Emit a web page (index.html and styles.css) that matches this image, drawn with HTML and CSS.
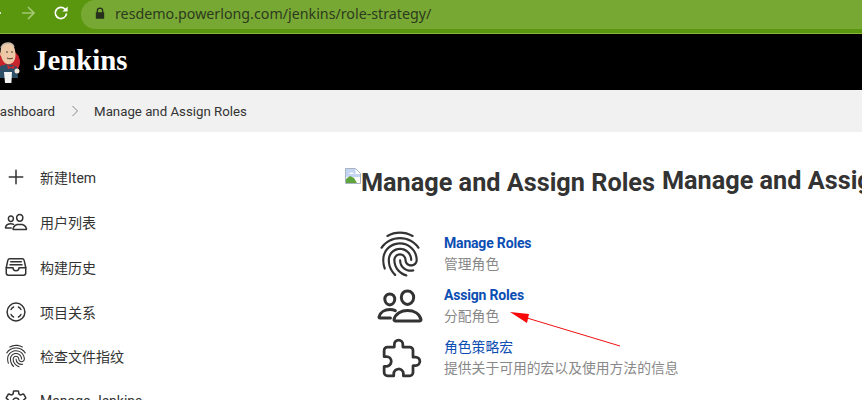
FILE: index.html
```html
<!DOCTYPE html>
<html lang="en">
<head>
    <meta charset="UTF-8">
    <meta name="viewport" content="width=device-width, initial-scale=1.0">
    <title>Manage and Assign Roles</title>
    <link rel="stylesheet" href="styles.css">
</head>
<body>

    <svg class="sprites" width="0" height="0">
        <symbol id="i-add" viewBox="0 0 512 512">
            <path class="ln" d="M256 112v288M400 256H112"/>
        </symbol>
        <symbol id="i-people" viewBox="0 0 512 512">
            <path class="ln" d="M402 168c-2.93 40.67-33.1 72-66 72s-63.12-31.32-66-72c-3-42.31 26.37-72 66-72s69 30.46 66 72z"/>
            <path class="ln" d="M336 304c-65.17 0-127.84 32.37-143.54 95.41-2.08 8.34 3.15 16.59 11.72 16.59h263.65c8.57 0 13.77-8.25 11.72-16.59C463.85 335.36 401.18 304 336 304z"/>
            <path class="ln" d="M200 185.94c-2.34 32.48-26.72 58.06-53 58.06s-50.7-25.57-53-58.06C91.61 152.15 115.34 128 147 128s55.39 24.77 53 57.94z"/>
            <path class="ln" d="M206 306c-18.05-8.27-37.93-11.45-59-11.45-52 0-102.1 25.85-114.65 76.2-1.65 6.66 2.53 13.25 9.37 13.25H154"/>
        </symbol>
        <symbol id="i-tray" viewBox="0 0 512 512">
            <path class="ln" d="M384 80H128c-26 0-43 14-48 40L48 272v112a48.14 48.14 0 0048 48h320a48.14 48.14 0 0048-48V272l-32-152c-5-27-23-40-48-40z"/>
            <path class="ln" d="M48 272h144M320 272h144M192 272a64 64 0 00128 0M144 144h224M128 208h256"/>
        </symbol>
        <symbol id="i-relation" viewBox="0 0 512 512">
            <circle class="ln" cx="256" cy="256" r="190"/>
            <path class="ln" d="M205 150c-24 10-44 30-54 54M307 150c24 10 44 30 54 54M205 362c-24-10-44-30-54-54M307 362c24-10 44-30 54-54"/>
        </symbol>
        <symbol id="i-finger" viewBox="0 0 512 512">
            <path class="fl" d="M390.42 75.28a10.45 10.45 0 01-5.32-1.44C340.72 50.08 302.35 40 256.35 40c-45.77 0-89.23 11.28-128.76 33.84C122 77 115.11 74.8 111.87 69a12.4 12.4 0 014.63-16.32A281.81 281.81 0 01256.35 16c49.23 0 92.23 11.28 139.39 36.48a12 12 0 014.85 16.08 11.3 11.3 0 01-10.17 6.72zm-330.79 126a11.73 11.73 0 01-6.7-2.16 12.26 12.26 0 01-2.78-16.8c22.89-33.6 52-60 86.69-78.48 72.58-38.84 165.51-39.12 238.32-.24 34.68 18.48 63.8 44.64 86.69 78a12.29 12.29 0 01-2.78 16.8 11.26 11.26 0 01-16.18-2.88c-20.8-30.24-47.15-54-78.36-70.56-66.34-35.28-151.18-35.28-217.29.24-31.44 16.8-57.79 40.8-78.59 71a10 10 0 01-9.02 4.08zM204.1 491a10.66 10.66 0 01-8.09-3.6C175.9 466.48 165 453 149.55 424c-16-29.52-24.27-65.52-24.27-104.16 0-71.28 58.71-129.36 130.84-129.36S387 248.56 387 319.84a11.56 11.56 0 11-23.11 0c0-58.08-48.32-105.36-107.72-105.36S148.4 261.76 148.4 319.84c0 34.56 7.39 66.48 21.49 92.4 14.8 27.6 25 39.36 42.77 58.08a12.67 12.67 0 010 17 12.44 12.44 0 01-8.56 3.68zm165.75-44.4c-27.51 0-51.78-7.2-71.66-21.36a124.34 124.34 0 01-52.47-101.76 11.56 11.56 0 1123.11 0 100.09 100.09 0 0043 81.6c16.41 11.52 35.6 17 58.95 17a147.41 147.41 0 0024-2.4c6.24-1.2 12.25 3.12 13.4 9.84a11.92 11.92 0 01-9.47 13.92 152.28 152.28 0 01-27.86 2.16zM323.38 496a13 13 0 01-3-.48c-36.76-10.56-60.8-24.72-86-50.4-32.37-33.36-50.16-77.76-50.16-125.28 0-38.88 31.9-70.56 71.19-70.56s71.2 31.68 71.2 70.56c0 25.68 21.5 46.56 48.08 46.56s48.08-20.88 48.08-46.56c0-90.48-75.13-163.92-167.59-163.92-65.65 0-125.75 37.92-152.79 96.72-9 19.44-13.64 42.24-13.64 67.2 0 18.72 1.61 48.24 15.48 86.64 2.32 6.24-.69 13.2-6.7 15.36a11.34 11.34 0 01-14.79-7 276.39 276.39 0 01-16.88-95c0-28.8 5.32-55 15.72-77.76 30.75-67 98.94-110.4 173.6-110.4 105.18 0 190.71 84.24 190.71 187.92 0 38.88-31.9 70.56-71.2 70.56s-71.2-31.68-71.2-70.56c.01-25.68-21.49-46.56-48.07-46.56s-48.08 20.88-48.08 46.56c0 41 15.26 79.44 43.23 108.24 22 22.56 43 35 75.59 44.4 6.24 1.68 9.71 8.4 8.09 14.64a11.39 11.39 0 01-10.87 9.24z"/>
        </symbol>
        <symbol id="i-gear" viewBox="0 0 512 512">
            <path class="ln" d="M262.29 192.31a64 64 0 1057.4 57.4 64.13 64.13 0 00-57.4-57.4zM416.39 256a154.34 154.34 0 01-1.53 20.79l45.21 35.46a10.81 10.81 0 012.45 13.75l-42.77 74a10.81 10.81 0 01-13.14 4.59l-44.9-18.08a16.11 16.11 0 00-15.17 1.75A164.48 164.48 0 01325 400.8a15.94 15.94 0 00-8.82 12.14l-6.73 47.89a11.08 11.08 0 01-10.68 9.17h-85.54a11.11 11.11 0 01-10.69-8.87l-6.72-47.82a16.07 16.07 0 00-9-12.22 155.3 155.3 0 01-21.46-12.57 16 16 0 00-15.11-1.71l-44.89 18.07a10.81 10.81 0 01-13.14-4.58l-42.77-74a10.8 10.8 0 012.45-13.75l38.21-30a16.05 16.05 0 006-14.08c-.36-4.17-.58-8.33-.58-12.5s.21-8.27.58-12.35a16 16 0 00-6.07-13.94l-38.19-30A10.81 10.81 0 0149.48 186l42.77-74a10.81 10.81 0 0113.14-4.59l44.9 18.08a16.11 16.11 0 0015.17-1.75A164.48 164.48 0 01187 111.2a15.94 15.94 0 008.82-12.14l6.73-47.89A11.08 11.08 0 01213.23 42h85.54a11.11 11.11 0 0110.69 8.87l6.72 47.82a16.07 16.07 0 009 12.22 155.3 155.3 0 0121.46 12.57 16 16 0 0015.11 1.71l44.89-18.07a10.81 10.81 0 0113.14 4.58l42.77 74a10.8 10.8 0 01-2.45 13.75l-38.21 30a16.05 16.05 0 00-6.05 14.08c.33 4.14.55 8.3.55 12.47z"/>
        </symbol>
        <symbol id="i-puzzle" viewBox="0 0 512 512">
            <path class="ln" d="M413.66 246.1H386a2 2 0 01-2-2v-77.24A38.86 38.86 0 00345.14 128H267.9a2 2 0 01-2-2V98.34c0-27.14-21.5-49.86-48.64-50.33a49.53 49.53 0 00-50.4 49.51V126a2 2 0 01-2 2H87.62A39.74 39.74 0 0048 167.62V238a2 2 0 002 2h26.91c29.37 0 53.68 25.48 54.09 54.85.42 29.87-23.51 57.15-53.29 57.15H50a2 2 0 00-2 2v70.38A39.74 39.74 0 0087.62 464H158a2 2 0 002-2v-20.93c0-30.28 24.75-56.35 55-57.06 30.1-.7 57 20.31 57 50.28V462a2 2 0 002 2h71.14A38.86 38.86 0 00384 425.14v-78a2 2 0 012-2h28.48c27.63 0 49.52-22.67 49.52-50.4s-23.2-48.64-50.34-48.64z"/>
        </symbol>
    </svg>

    <div class="browser-bar">
        <svg class="nav-icon back" viewBox="0 0 16 16"><path d="M14 8H2M8 2 2 8l6 6"/></svg>
        <svg class="nav-icon forward" viewBox="0 0 16 16"><path d="M2 8h12M8 2l6 6-6 6"/></svg>
        <svg class="nav-icon reload" viewBox="0 0 16 16"><path d="M13.5 8.5A5.6 5.6 0 1 1 11.8 3.9L13.6 5.6"/><path class="solid" d="M14.6 1.4v5.2H9.4z"/></svg>
        <div class="omnibox">
            <svg class="lock" viewBox="0 0 12 14"><path d="M2 6V4.3a4 4 0 0 1 8 0V6h1v8H1V6zm1.6 0h4.8V4.3a2.4 2.4 0 0 0-4.8 0z"/></svg>
            <span class="url">resdemo.powerlong.com/jenkins/role-strategy/</span>
        </div>
    </div>

    <header class="page-head">
        <svg class="logo" viewBox="0 0 26 42">
            <circle cx="13" cy="21" r="12" fill="#c8262c"/>
            <path d="M1 28c4-5 16-6 21-2l1 11H1z" fill="#2f4f66"/>
            <path d="M6 7c2-6 11-7 13-1 2 5 2 11 0 14-2 4-8 4-10 1C6 18 5 12 6 7z" fill="#eec9a8"/>
            <path d="M6 7c2-6 11-7 13-1" fill="none" stroke="#c4b8ab" stroke-width="1.4"/>
            <circle cx="5.5" cy="13" r="1.6" fill="#e2b694"/>
            <path d="M11 11h2M16 11h2M12 17c2 1 4 1 6 0" fill="none" stroke="#33261d" stroke-width=".9"/>
            <path d="M12 24l4 2 4-2-1 4-3-1-3 1z" fill="#d0282e"/>
            <path d="M9 31h8l-.6 11H10z" fill="#f4f4f2"/>
            <circle cx="22" cy="30" r="2.5" fill="#f0e4d8"/>
        </svg>
        <span class="brand">Jenkins</span>
    </header>

    <nav class="breadcrumb">
        <span>Dashboard</span>
        <svg class="crumb-sep" viewBox="0 0 8 12"><path d="M1.5 1 6.5 6l-5 5"/></svg>
        <span>Manage and Assign Roles</span>
    </nav>

    <div class="layout">
        <aside class="sidebar">
            <div class="side-item"><svg class="side-icon"><use href="#i-add"/></svg><span>新建Item</span></div>
            <div class="side-item"><svg class="side-icon"><use href="#i-people"/></svg><span>用户列表</span></div>
            <div class="side-item"><svg class="side-icon"><use href="#i-tray"/></svg><span>构建历史</span></div>
            <div class="side-item"><svg class="side-icon"><use href="#i-relation"/></svg><span>项目关系</span></div>
            <div class="side-item"><svg class="side-icon"><use href="#i-finger"/></svg><span>检查文件指纹</span></div>
            <div class="side-item"><svg class="side-icon"><use href="#i-gear"/></svg><span>Manage Jenkins</span></div>
        </aside>

        <main class="content">
            <h1 class="title">
                <span class="title-alt">
                    <svg class="broken-img" viewBox="0 0 16 16">
                        <path d="M.5.5h10l5 5v10H.5z" fill="#fff" stroke="#a9b4c2"/>
                        <path d="M1 1h9.5v5H15v3H1z" fill="#c3d5f2"/>
                        <path d="M1 11l4-3 4 2 3 5H1z" fill="#5fa33c"/>
                        <path d="M4 6c1-2 4-2 5 0z" fill="#fff"/>
                    </svg>Manage and Assign Roles</span>
                <span class="title-text">Manage and Assign Roles</span>
            </h1>

            <div class="task">
                <svg class="task-icon"><use href="#i-finger"/></svg>
                <div class="task-body">
                    <a class="task-link">Manage Roles</a>
                    <div class="task-desc">管理角色</div>
                </div>
            </div>
            <div class="task">
                <svg class="task-icon"><use href="#i-people"/></svg>
                <div class="task-body">
                    <a class="task-link">Assign Roles</a>
                    <div class="task-desc">分配角色</div>
                </div>
            </div>
            <div class="task">
                <svg class="task-icon puzzle"><use href="#i-puzzle"/></svg>
                <div class="task-body">
                    <a class="task-link task-link-cjk">角色策略宏</a>
                    <div class="task-desc">提供关于可用的宏以及使用方法的信息</div>
                </div>
            </div>
        </main>
    </div>

    <!-- red annotation arrow drawn over the page -->
    <svg class="annotation" width="862" height="400" viewBox="0 0 862 400">
        <path d="M620 346 527 318" stroke="#f01010" stroke-width="1" fill="none"/>
        <path d="M510 312 529 314 527 323z" fill="#f80808"/>
    </svg>

</body>
</html>
```

FILE: styles.css
```css
* {
    box-sizing: border-box;
}
html, body {
    height: 100%;
}
body {
    margin: 0;
    overflow: hidden;
    background-color: #fff;
    color: #333;
    font-family: Roboto, "Noto Sans CJK SC", sans-serif;
    font-size: 14px;
}
.sprites {
    position: absolute;
}
.ln {
    fill: none;
    stroke: currentColor;
    stroke-width: 32;
    stroke-linecap: round;
    stroke-linejoin: round;
}
.fl {
    fill: currentColor;
}

/* browser chrome */
.browser-bar {
    display: flex;
    align-items: flex-start;
    height: 34px;
    background-color: #5a970f;
    border-bottom: 1px solid #86b63f;
}
.nav-icon {
    flex: none;
    width: 16px;
    height: 16px;
    margin-top: 5px;
    fill: none;
    stroke: #fff;
    stroke-width: 1.7;
}
.nav-icon .solid {
    fill: #fff;
    stroke: none;
}
.back {
    margin-left: -13px;
}
.forward {
    margin-left: 17px;
    stroke: #a4c873;
}
.reload {
    margin-left: 17px;
}
.omnibox {
    display: flex;
    align-items: center;
    flex: 1;
    height: 29px;
    margin-left: 12px;
    padding: 0 0 3px 14px;
    background-color: #78a834;
    border-radius: 15px 0 0 15px;
}
.lock {
    width: 10px;
    height: 12px;
    fill: #262f1c;
}
.url {
    margin-left: 10px;
    color: #2c3a1e;
    font-family: "Noto Sans", sans-serif;
    font-size: 14.25px;
    white-space: nowrap;
}

/* jenkins header */
.page-head {
    display: flex;
    align-items: center;
    height: 56px;
    background-color: #000;
}
.logo {
    flex: none;
    width: 26px;
    height: 42px;
    margin-left: -5px;
}
.brand {
    margin: 0 0 3px 12px;
    color: #fff;
    font-family: "Liberation Serif", serif;
    font-size: 28.8px;
    font-weight: bold;
}

.breadcrumb {
    display: flex;
    align-items: center;
    height: 42px;
    margin-left: -9px;
    background-color: #f1f1f1;
    white-space: nowrap;
    font-size: 13.25px;
}
.crumb-sep {
    width: 8px;
    height: 12px;
    margin: 0 15px 0 16px;
    fill: none;
    stroke: #888;
}

.layout {
    display: flex;
}
.sidebar {
    flex: none;
    width: 345px;
    padding-top: 23px;
}
.side-item {
    display: flex;
    align-items: center;
    height: 44.75px;
    padding-left: 4px;
}
.side-icon {
    flex: none;
    width: 24px;
    height: 24px;
    margin-right: 12px;
}

.content {
    flex: 1;
    min-width: 0;
    padding-top: 31px;
}
.title {
    display: flex;
    align-items: flex-start;
    margin: 0 0 27px;
    font-size: 25.25px;
    font-weight: bold;
    line-height: 36px;
    white-space: nowrap;
}
.title-alt {
    margin-top: 2px;
    margin-right: 7px;
}
.broken-img {
    width: 16px;
    height: 16px;
    margin-bottom: 17px;
    vertical-align: bottom;
}

.task {
    display: flex;
    align-items: center;
    height: 52px;
    padding-left: 31px;
}
.task-icon {
    flex: none;
    width: 48px;
    height: 48px;
    margin-right: 20px;
}
.task-icon.puzzle {
    width: 44px;
    height: 44px;
    margin-left: 4px;
}
.task-link {
    display: block;
    color: #0b4eb3;
    font-size: 14px;
    font-weight: bold;
    letter-spacing: -0.18px;
    line-height: 21px;
}
.task-link-cjk {
    font-weight: 400;
    font-size: 13.8px;
    letter-spacing: 0;
}
.task-desc {
    color: #888;
    font-size: 13.8px;
    line-height: 21px;
}

.annotation {
    position: absolute;
    top: 0;
    left: 0;
    pointer-events: none;
}
```
